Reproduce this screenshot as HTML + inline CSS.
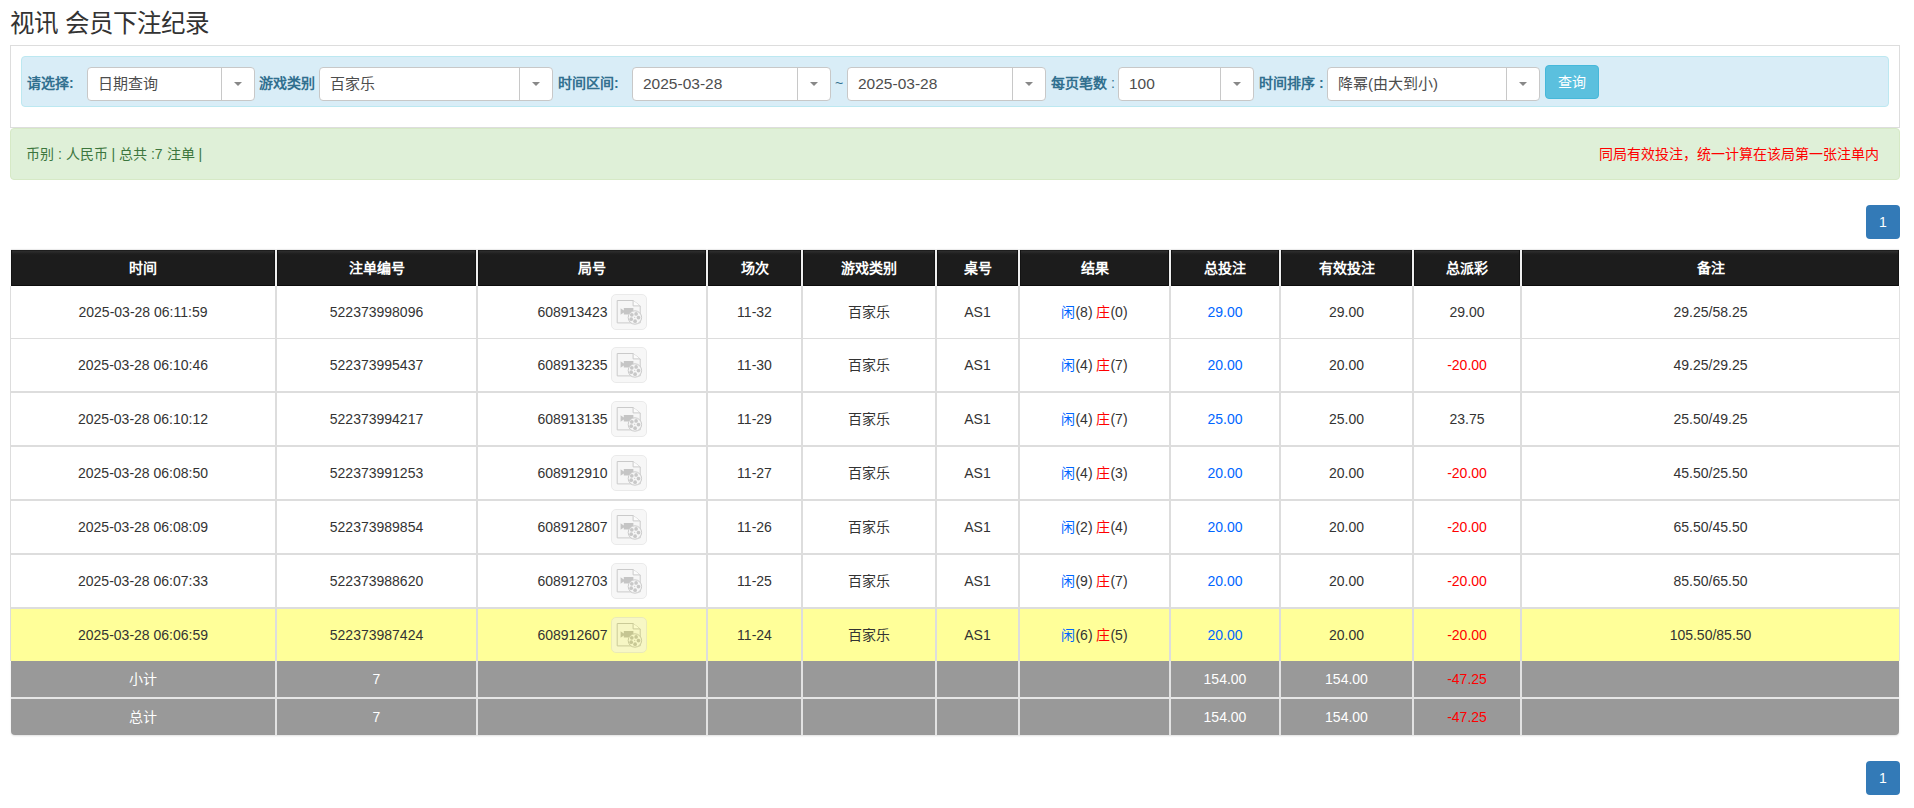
<!DOCTYPE html>
<html lang="zh-CN">
<head>
<meta charset="utf-8">
<style>
html,body{margin:0;padding:0;background:#fff;}
body{width:1914px;height:808px;position:relative;overflow:hidden;font-family:"Liberation Sans",sans-serif;color:#333;font-size:14px;}
.abs{position:absolute;}
#title{left:10px;top:7px;font-size:24.5px;line-height:34px;color:#333;white-space:nowrap;}
#panel{left:10px;top:45px;width:1888px;height:81px;border:1px solid #ddd;box-sizing:content-box;}
#info{left:21px;top:56px;width:1866px;height:49px;background:#d9edf7;border:1px solid #bce8f1;border-radius:4px;}
.lbl{position:absolute;top:72px;line-height:22px;font-size:14px;font-weight:bold;color:#31708f;white-space:nowrap;}
.sel{position:absolute;top:67px;height:32px;background:#fff;border:1px solid #c8c8c8;border-radius:4px;box-sizing:content-box;}
.sel .t{position:absolute;left:10px;top:0;line-height:32px;font-size:15.5px;color:#4d4d4d;white-space:nowrap;}
.sel .dv{position:absolute;top:0;bottom:0;width:1px;background:#c8c8c8;}
.sel .ar{position:absolute;top:14px;width:0;height:0;border-left:4px solid transparent;border-right:4px solid transparent;border-top:4px solid #888;}
#btn{left:1545px;top:65px;width:52px;height:32px;background:#5bc0de;border:1px solid #46b8da;border-radius:4px;color:#fff;font-size:14px;line-height:32px;text-align:center;}
#alert{left:10px;top:128px;width:1888px;height:50px;background:#dff0d8;border:1px solid #d6e9c6;border-radius:4px;}
#alert .l{position:absolute;left:15px;top:0;line-height:50px;color:#3c763d;font-size:14px;white-space:nowrap;}
#alert .r{position:absolute;right:20px;top:0;line-height:50px;color:#f00;font-size:14px;white-space:nowrap;}
.pg{position:absolute;left:1866px;width:34px;height:34px;background:#337ab7;border-radius:4px;color:#fff;font-weight:normal;font-size:14px;line-height:34px;text-align:center;}

.tb{position:absolute;left:0;top:0;}
.hd{position:absolute;top:250px;height:36px;background:linear-gradient(#1e1e1e 0,#1e1e1e 1px,#2b2b2b 1px,#2b2b2b 2px,#222 3px,#1c1c1c 5px);box-shadow:inset 1px 0 #131313,inset -1px 0 #131313,inset 0 -1px #0d0d0d,0 -1px 1px rgba(0,0,0,.08);}
.hd span{position:absolute;left:0;right:0;top:0;line-height:36px;text-align:center;color:#fff;font-weight:bold;font-size:14px;}
.hsep{position:absolute;top:249px;height:37px;width:2px;background:#efefef;}
.cell{position:absolute;text-align:center;white-space:nowrap;font-size:14px;color:#333;}
.vl{position:absolute;width:2px;background:#ddd;}
.hl{position:absolute;height:2px;background:#ddd;}
.yrow{position:absolute;background:#ffff99;}
.grow{position:absolute;background:#999;}

.b{color:#06f;}
.rd{color:#f00;}
.ic{display:inline-block;vertical-align:middle;width:36px;height:36px;margin-left:3px;top:-1px;border:1px solid #d7d7d7;border-radius:5px;background:#f1f1f1;position:relative;box-sizing:border-box;opacity:.5;}
.ic svg{position:absolute;left:-1px;top:-1px;}
</style>
</head>
<body>
<div id="title" class="abs">视讯 会员下注纪录</div>
<div id="panel" class="abs"></div>
<div id="info" class="abs"></div>

<div class="lbl" style="left:27px">请选择:</div>
<div class="sel" style="left:87px;width:166px"><span class="t" style="font-size:15px">日期查询</span><span class="dv" style="left:133px"></span><span class="ar" style="left:146px"></span></div>

<div class="lbl" style="left:259px">游戏类别</div>
<div class="sel" style="left:319px;width:232px"><span class="t" style="font-size:15px">百家乐</span><span class="dv" style="left:199px"></span><span class="ar" style="left:212px"></span></div>

<div class="lbl" style="left:558px">时间区间:</div>
<div class="sel" style="left:632px;width:197px"><span class="t">2025-03-28</span><span class="dv" style="left:164px"></span><span class="ar" style="left:177px"></span></div>
<div class="lbl" style="left:835px;font-weight:normal">~</div>
<div class="sel" style="left:847px;width:197px"><span class="t">2025-03-28</span><span class="dv" style="left:164px"></span><span class="ar" style="left:177px"></span></div>

<div class="lbl" style="left:1051px">每页笔数 <span style="font-weight:normal">:</span></div>
<div class="sel" style="left:1118px;width:134px"><span class="t">100</span><span class="dv" style="left:101px"></span><span class="ar" style="left:114px"></span></div>

<div class="lbl" style="left:1259px">时间排序 :</div>
<div class="sel" style="left:1327px;width:211px"><span class="t" style="font-size:15px">降幂(由大到小)</span><span class="dv" style="left:178px"></span><span class="ar" style="left:191px"></span></div>

<div id="btn" class="abs">查询</div>

<div id="alert" class="abs"><span class="l">币别 : 人民币 | 总共 :7 注单 |</span><span class="r">同局有效投注，统一计算在该局第一张注单内</span></div>

<div class="pg" style="top:205px">1</div>

<div class="hd" style="left:11px;width:264px"><span>时间</span></div>
<div class="hd" style="left:277px;width:199px"><span>注单编号</span></div>
<div class="hd" style="left:478px;width:228px"><span>局号</span></div>
<div class="hd" style="left:708px;width:93px"><span>场次</span></div>
<div class="hd" style="left:803px;width:132px"><span>游戏类别</span></div>
<div class="hd" style="left:937px;width:81px"><span>桌号</span></div>
<div class="hd" style="left:1020px;width:149px"><span>结果</span></div>
<div class="hd" style="left:1171px;width:108px"><span>总投注</span></div>
<div class="hd" style="left:1281px;width:131px"><span>有效投注</span></div>
<div class="hd" style="left:1414px;width:106px"><span>总派彩</span></div>
<div class="hd" style="left:1522px;width:377px"><span>备注</span></div>
<div class="hsep" style="left:275px"></div>
<div class="hsep" style="left:476px"></div>
<div class="hsep" style="left:706px"></div>
<div class="hsep" style="left:801px"></div>
<div class="hsep" style="left:935px"></div>
<div class="hsep" style="left:1018px"></div>
<div class="hsep" style="left:1169px"></div>
<div class="hsep" style="left:1279px"></div>
<div class="hsep" style="left:1412px"></div>
<div class="hsep" style="left:1520px"></div>
<div class="vl" style="left:10px;top:286px;height:375px;width:1px"></div>
<div class="vl" style="left:1899px;top:286px;height:375px;width:1px;background:#e2e2e2"></div>
<div class="yrow" style="left:11px;top:609px;width:1888px;height:52px"></div>
<div class="grow" style="left:11px;top:661px;width:1888px;height:74px;border-radius:0 0 4px 4px;box-shadow:0 1px 2px rgba(0,0,0,.12)"></div>
<div class="hl" style="left:11px;top:338px;width:1888px;height:1px"></div>
<div class="hl" style="left:11px;top:391px;width:1888px"></div>
<div class="hl" style="left:11px;top:445px;width:1888px"></div>
<div class="hl" style="left:11px;top:499px;width:1888px"></div>
<div class="hl" style="left:11px;top:553px;width:1888px"></div>
<div class="hl" style="left:11px;top:607px;width:1888px"></div>
<div class="hl" style="left:11px;top:697px;width:1888px;background:#e6e6e6"></div>
<div class="vl" style="left:275px;top:286px;height:375px"></div>
<div class="vl" style="left:275px;top:661px;height:74px;background:#e2e2e2"></div>
<div class="vl" style="left:476px;top:286px;height:375px"></div>
<div class="vl" style="left:476px;top:661px;height:74px;background:#e2e2e2"></div>
<div class="vl" style="left:706px;top:286px;height:375px"></div>
<div class="vl" style="left:706px;top:661px;height:74px;background:#e2e2e2"></div>
<div class="vl" style="left:801px;top:286px;height:375px"></div>
<div class="vl" style="left:801px;top:661px;height:74px;background:#e2e2e2"></div>
<div class="vl" style="left:935px;top:286px;height:375px"></div>
<div class="vl" style="left:935px;top:661px;height:74px;background:#e2e2e2"></div>
<div class="vl" style="left:1018px;top:286px;height:375px"></div>
<div class="vl" style="left:1018px;top:661px;height:74px;background:#e2e2e2"></div>
<div class="vl" style="left:1169px;top:286px;height:375px"></div>
<div class="vl" style="left:1169px;top:661px;height:74px;background:#e2e2e2"></div>
<div class="vl" style="left:1279px;top:286px;height:375px"></div>
<div class="vl" style="left:1279px;top:661px;height:74px;background:#e2e2e2"></div>
<div class="vl" style="left:1412px;top:286px;height:375px"></div>
<div class="vl" style="left:1412px;top:661px;height:74px;background:#e2e2e2"></div>
<div class="vl" style="left:1520px;top:286px;height:375px"></div>
<div class="vl" style="left:1520px;top:661px;height:74px;background:#e2e2e2"></div>
<div class="cell" style="left:11px;width:264px;top:286px;height:52px;line-height:52px;">2025-03-28 06:11:59</div>
<div class="cell" style="left:277px;width:199px;top:286px;height:52px;line-height:52px;">522373998096</div>
<div class="cell" style="left:478px;width:228px;top:286px;height:52px;line-height:52px;">608913423<span class="ic"><svg width="35" height="36" viewBox="0 0 35 36"><path d="M6.2 6.5H22.1L29.2 12V28.9H6.2Z" fill="#efefef" stroke="#979797" stroke-width="1"/><path d="M22.1 6.5V11.9H29.2" fill="#fbfbfb" stroke="#979797" stroke-width="1"/><path d="M9.6 14.2L12.8 16.4V13.9H22.4V20.4H12.8V18.6L9.6 20.8Z" fill="#8d8d8d"/><circle cx="23.9" cy="23.5" r="6.7" fill="#efefef" stroke="#979797" stroke-width="1"/><g fill="#939393"><circle cx="20.8" cy="20.8" r="1.85"/><circle cx="25.1" cy="19.9" r="1.85"/><circle cx="27.5" cy="23.6" r="1.85"/><circle cx="20.2" cy="25.2" r="1.85"/><circle cx="24.1" cy="27.2" r="1.85"/><circle cx="23.7" cy="23.3" r="0.6"/></g></svg></span></div>
<div class="cell" style="left:708px;width:93px;top:286px;height:52px;line-height:52px;">11-32</div>
<div class="cell" style="left:803px;width:132px;top:286px;height:52px;line-height:52px;">百家乐</div>
<div class="cell" style="left:937px;width:81px;top:286px;height:52px;line-height:52px;">AS1</div>
<div class="cell" style="left:1020px;width:149px;top:286px;height:52px;line-height:52px;"><span class="b">闲</span>(8) <span class="rd">庄</span>(0)</div>
<div class="cell" style="left:1171px;width:108px;top:286px;height:52px;line-height:52px;color:#06f">29.00</div>
<div class="cell" style="left:1281px;width:131px;top:286px;height:52px;line-height:52px;">29.00</div>
<div class="cell" style="left:1414px;width:106px;top:286px;height:52px;line-height:52px;">29.00</div>
<div class="cell" style="left:1522px;width:377px;top:286px;height:52px;line-height:52px;">29.25/58.25</div>
<div class="cell" style="left:11px;width:264px;top:339px;height:52px;line-height:52px;">2025-03-28 06:10:46</div>
<div class="cell" style="left:277px;width:199px;top:339px;height:52px;line-height:52px;">522373995437</div>
<div class="cell" style="left:478px;width:228px;top:339px;height:52px;line-height:52px;">608913235<span class="ic"><svg width="35" height="36" viewBox="0 0 35 36"><path d="M6.2 6.5H22.1L29.2 12V28.9H6.2Z" fill="#efefef" stroke="#979797" stroke-width="1"/><path d="M22.1 6.5V11.9H29.2" fill="#fbfbfb" stroke="#979797" stroke-width="1"/><path d="M9.6 14.2L12.8 16.4V13.9H22.4V20.4H12.8V18.6L9.6 20.8Z" fill="#8d8d8d"/><circle cx="23.9" cy="23.5" r="6.7" fill="#efefef" stroke="#979797" stroke-width="1"/><g fill="#939393"><circle cx="20.8" cy="20.8" r="1.85"/><circle cx="25.1" cy="19.9" r="1.85"/><circle cx="27.5" cy="23.6" r="1.85"/><circle cx="20.2" cy="25.2" r="1.85"/><circle cx="24.1" cy="27.2" r="1.85"/><circle cx="23.7" cy="23.3" r="0.6"/></g></svg></span></div>
<div class="cell" style="left:708px;width:93px;top:339px;height:52px;line-height:52px;">11-30</div>
<div class="cell" style="left:803px;width:132px;top:339px;height:52px;line-height:52px;">百家乐</div>
<div class="cell" style="left:937px;width:81px;top:339px;height:52px;line-height:52px;">AS1</div>
<div class="cell" style="left:1020px;width:149px;top:339px;height:52px;line-height:52px;"><span class="b">闲</span>(4) <span class="rd">庄</span>(7)</div>
<div class="cell" style="left:1171px;width:108px;top:339px;height:52px;line-height:52px;color:#06f">20.00</div>
<div class="cell" style="left:1281px;width:131px;top:339px;height:52px;line-height:52px;">20.00</div>
<div class="cell" style="left:1414px;width:106px;top:339px;height:52px;line-height:52px;color:#f00">-20.00</div>
<div class="cell" style="left:1522px;width:377px;top:339px;height:52px;line-height:52px;">49.25/29.25</div>
<div class="cell" style="left:11px;width:264px;top:393px;height:52px;line-height:52px;">2025-03-28 06:10:12</div>
<div class="cell" style="left:277px;width:199px;top:393px;height:52px;line-height:52px;">522373994217</div>
<div class="cell" style="left:478px;width:228px;top:393px;height:52px;line-height:52px;">608913135<span class="ic"><svg width="35" height="36" viewBox="0 0 35 36"><path d="M6.2 6.5H22.1L29.2 12V28.9H6.2Z" fill="#efefef" stroke="#979797" stroke-width="1"/><path d="M22.1 6.5V11.9H29.2" fill="#fbfbfb" stroke="#979797" stroke-width="1"/><path d="M9.6 14.2L12.8 16.4V13.9H22.4V20.4H12.8V18.6L9.6 20.8Z" fill="#8d8d8d"/><circle cx="23.9" cy="23.5" r="6.7" fill="#efefef" stroke="#979797" stroke-width="1"/><g fill="#939393"><circle cx="20.8" cy="20.8" r="1.85"/><circle cx="25.1" cy="19.9" r="1.85"/><circle cx="27.5" cy="23.6" r="1.85"/><circle cx="20.2" cy="25.2" r="1.85"/><circle cx="24.1" cy="27.2" r="1.85"/><circle cx="23.7" cy="23.3" r="0.6"/></g></svg></span></div>
<div class="cell" style="left:708px;width:93px;top:393px;height:52px;line-height:52px;">11-29</div>
<div class="cell" style="left:803px;width:132px;top:393px;height:52px;line-height:52px;">百家乐</div>
<div class="cell" style="left:937px;width:81px;top:393px;height:52px;line-height:52px;">AS1</div>
<div class="cell" style="left:1020px;width:149px;top:393px;height:52px;line-height:52px;"><span class="b">闲</span>(4) <span class="rd">庄</span>(7)</div>
<div class="cell" style="left:1171px;width:108px;top:393px;height:52px;line-height:52px;color:#06f">25.00</div>
<div class="cell" style="left:1281px;width:131px;top:393px;height:52px;line-height:52px;">25.00</div>
<div class="cell" style="left:1414px;width:106px;top:393px;height:52px;line-height:52px;">23.75</div>
<div class="cell" style="left:1522px;width:377px;top:393px;height:52px;line-height:52px;">25.50/49.25</div>
<div class="cell" style="left:11px;width:264px;top:447px;height:52px;line-height:52px;">2025-03-28 06:08:50</div>
<div class="cell" style="left:277px;width:199px;top:447px;height:52px;line-height:52px;">522373991253</div>
<div class="cell" style="left:478px;width:228px;top:447px;height:52px;line-height:52px;">608912910<span class="ic"><svg width="35" height="36" viewBox="0 0 35 36"><path d="M6.2 6.5H22.1L29.2 12V28.9H6.2Z" fill="#efefef" stroke="#979797" stroke-width="1"/><path d="M22.1 6.5V11.9H29.2" fill="#fbfbfb" stroke="#979797" stroke-width="1"/><path d="M9.6 14.2L12.8 16.4V13.9H22.4V20.4H12.8V18.6L9.6 20.8Z" fill="#8d8d8d"/><circle cx="23.9" cy="23.5" r="6.7" fill="#efefef" stroke="#979797" stroke-width="1"/><g fill="#939393"><circle cx="20.8" cy="20.8" r="1.85"/><circle cx="25.1" cy="19.9" r="1.85"/><circle cx="27.5" cy="23.6" r="1.85"/><circle cx="20.2" cy="25.2" r="1.85"/><circle cx="24.1" cy="27.2" r="1.85"/><circle cx="23.7" cy="23.3" r="0.6"/></g></svg></span></div>
<div class="cell" style="left:708px;width:93px;top:447px;height:52px;line-height:52px;">11-27</div>
<div class="cell" style="left:803px;width:132px;top:447px;height:52px;line-height:52px;">百家乐</div>
<div class="cell" style="left:937px;width:81px;top:447px;height:52px;line-height:52px;">AS1</div>
<div class="cell" style="left:1020px;width:149px;top:447px;height:52px;line-height:52px;"><span class="b">闲</span>(4) <span class="rd">庄</span>(3)</div>
<div class="cell" style="left:1171px;width:108px;top:447px;height:52px;line-height:52px;color:#06f">20.00</div>
<div class="cell" style="left:1281px;width:131px;top:447px;height:52px;line-height:52px;">20.00</div>
<div class="cell" style="left:1414px;width:106px;top:447px;height:52px;line-height:52px;color:#f00">-20.00</div>
<div class="cell" style="left:1522px;width:377px;top:447px;height:52px;line-height:52px;">45.50/25.50</div>
<div class="cell" style="left:11px;width:264px;top:501px;height:52px;line-height:52px;">2025-03-28 06:08:09</div>
<div class="cell" style="left:277px;width:199px;top:501px;height:52px;line-height:52px;">522373989854</div>
<div class="cell" style="left:478px;width:228px;top:501px;height:52px;line-height:52px;">608912807<span class="ic"><svg width="35" height="36" viewBox="0 0 35 36"><path d="M6.2 6.5H22.1L29.2 12V28.9H6.2Z" fill="#efefef" stroke="#979797" stroke-width="1"/><path d="M22.1 6.5V11.9H29.2" fill="#fbfbfb" stroke="#979797" stroke-width="1"/><path d="M9.6 14.2L12.8 16.4V13.9H22.4V20.4H12.8V18.6L9.6 20.8Z" fill="#8d8d8d"/><circle cx="23.9" cy="23.5" r="6.7" fill="#efefef" stroke="#979797" stroke-width="1"/><g fill="#939393"><circle cx="20.8" cy="20.8" r="1.85"/><circle cx="25.1" cy="19.9" r="1.85"/><circle cx="27.5" cy="23.6" r="1.85"/><circle cx="20.2" cy="25.2" r="1.85"/><circle cx="24.1" cy="27.2" r="1.85"/><circle cx="23.7" cy="23.3" r="0.6"/></g></svg></span></div>
<div class="cell" style="left:708px;width:93px;top:501px;height:52px;line-height:52px;">11-26</div>
<div class="cell" style="left:803px;width:132px;top:501px;height:52px;line-height:52px;">百家乐</div>
<div class="cell" style="left:937px;width:81px;top:501px;height:52px;line-height:52px;">AS1</div>
<div class="cell" style="left:1020px;width:149px;top:501px;height:52px;line-height:52px;"><span class="b">闲</span>(2) <span class="rd">庄</span>(4)</div>
<div class="cell" style="left:1171px;width:108px;top:501px;height:52px;line-height:52px;color:#06f">20.00</div>
<div class="cell" style="left:1281px;width:131px;top:501px;height:52px;line-height:52px;">20.00</div>
<div class="cell" style="left:1414px;width:106px;top:501px;height:52px;line-height:52px;color:#f00">-20.00</div>
<div class="cell" style="left:1522px;width:377px;top:501px;height:52px;line-height:52px;">65.50/45.50</div>
<div class="cell" style="left:11px;width:264px;top:555px;height:52px;line-height:52px;">2025-03-28 06:07:33</div>
<div class="cell" style="left:277px;width:199px;top:555px;height:52px;line-height:52px;">522373988620</div>
<div class="cell" style="left:478px;width:228px;top:555px;height:52px;line-height:52px;">608912703<span class="ic"><svg width="35" height="36" viewBox="0 0 35 36"><path d="M6.2 6.5H22.1L29.2 12V28.9H6.2Z" fill="#efefef" stroke="#979797" stroke-width="1"/><path d="M22.1 6.5V11.9H29.2" fill="#fbfbfb" stroke="#979797" stroke-width="1"/><path d="M9.6 14.2L12.8 16.4V13.9H22.4V20.4H12.8V18.6L9.6 20.8Z" fill="#8d8d8d"/><circle cx="23.9" cy="23.5" r="6.7" fill="#efefef" stroke="#979797" stroke-width="1"/><g fill="#939393"><circle cx="20.8" cy="20.8" r="1.85"/><circle cx="25.1" cy="19.9" r="1.85"/><circle cx="27.5" cy="23.6" r="1.85"/><circle cx="20.2" cy="25.2" r="1.85"/><circle cx="24.1" cy="27.2" r="1.85"/><circle cx="23.7" cy="23.3" r="0.6"/></g></svg></span></div>
<div class="cell" style="left:708px;width:93px;top:555px;height:52px;line-height:52px;">11-25</div>
<div class="cell" style="left:803px;width:132px;top:555px;height:52px;line-height:52px;">百家乐</div>
<div class="cell" style="left:937px;width:81px;top:555px;height:52px;line-height:52px;">AS1</div>
<div class="cell" style="left:1020px;width:149px;top:555px;height:52px;line-height:52px;"><span class="b">闲</span>(9) <span class="rd">庄</span>(7)</div>
<div class="cell" style="left:1171px;width:108px;top:555px;height:52px;line-height:52px;color:#06f">20.00</div>
<div class="cell" style="left:1281px;width:131px;top:555px;height:52px;line-height:52px;">20.00</div>
<div class="cell" style="left:1414px;width:106px;top:555px;height:52px;line-height:52px;color:#f00">-20.00</div>
<div class="cell" style="left:1522px;width:377px;top:555px;height:52px;line-height:52px;">85.50/65.50</div>
<div class="cell" style="left:11px;width:264px;top:609px;height:52px;line-height:52px;">2025-03-28 06:06:59</div>
<div class="cell" style="left:277px;width:199px;top:609px;height:52px;line-height:52px;">522373987424</div>
<div class="cell" style="left:478px;width:228px;top:609px;height:52px;line-height:52px;">608912607<span class="ic"><svg width="35" height="36" viewBox="0 0 35 36"><path d="M6.2 6.5H22.1L29.2 12V28.9H6.2Z" fill="#efefef" stroke="#979797" stroke-width="1"/><path d="M22.1 6.5V11.9H29.2" fill="#fbfbfb" stroke="#979797" stroke-width="1"/><path d="M9.6 14.2L12.8 16.4V13.9H22.4V20.4H12.8V18.6L9.6 20.8Z" fill="#8d8d8d"/><circle cx="23.9" cy="23.5" r="6.7" fill="#efefef" stroke="#979797" stroke-width="1"/><g fill="#939393"><circle cx="20.8" cy="20.8" r="1.85"/><circle cx="25.1" cy="19.9" r="1.85"/><circle cx="27.5" cy="23.6" r="1.85"/><circle cx="20.2" cy="25.2" r="1.85"/><circle cx="24.1" cy="27.2" r="1.85"/><circle cx="23.7" cy="23.3" r="0.6"/></g></svg></span></div>
<div class="cell" style="left:708px;width:93px;top:609px;height:52px;line-height:52px;">11-24</div>
<div class="cell" style="left:803px;width:132px;top:609px;height:52px;line-height:52px;">百家乐</div>
<div class="cell" style="left:937px;width:81px;top:609px;height:52px;line-height:52px;">AS1</div>
<div class="cell" style="left:1020px;width:149px;top:609px;height:52px;line-height:52px;"><span class="b">闲</span>(6) <span class="rd">庄</span>(5)</div>
<div class="cell" style="left:1171px;width:108px;top:609px;height:52px;line-height:52px;color:#06f">20.00</div>
<div class="cell" style="left:1281px;width:131px;top:609px;height:52px;line-height:52px;">20.00</div>
<div class="cell" style="left:1414px;width:106px;top:609px;height:52px;line-height:52px;color:#f00">-20.00</div>
<div class="cell" style="left:1522px;width:377px;top:609px;height:52px;line-height:52px;">105.50/85.50</div>
<div class="cell" style="left:11px;width:264px;top:661px;height:36px;line-height:36px;color:#fff">小计</div>
<div class="cell" style="left:277px;width:199px;top:661px;height:36px;line-height:36px;color:#fff">7</div>
<div class="cell" style="left:1171px;width:108px;top:661px;height:36px;line-height:36px;color:#fff">154.00</div>
<div class="cell" style="left:1281px;width:131px;top:661px;height:36px;line-height:36px;color:#fff">154.00</div>
<div class="cell" style="left:1414px;width:106px;top:661px;height:36px;line-height:36px;color:#f00">-47.25</div>
<div class="cell" style="left:11px;width:264px;top:699px;height:36px;line-height:36px;color:#fff">总计</div>
<div class="cell" style="left:277px;width:199px;top:699px;height:36px;line-height:36px;color:#fff">7</div>
<div class="cell" style="left:1171px;width:108px;top:699px;height:36px;line-height:36px;color:#fff">154.00</div>
<div class="cell" style="left:1281px;width:131px;top:699px;height:36px;line-height:36px;color:#fff">154.00</div>
<div class="cell" style="left:1414px;width:106px;top:699px;height:36px;line-height:36px;color:#f00">-47.25</div>

<div class="pg" style="top:761px">1</div>
</body>
</html>
